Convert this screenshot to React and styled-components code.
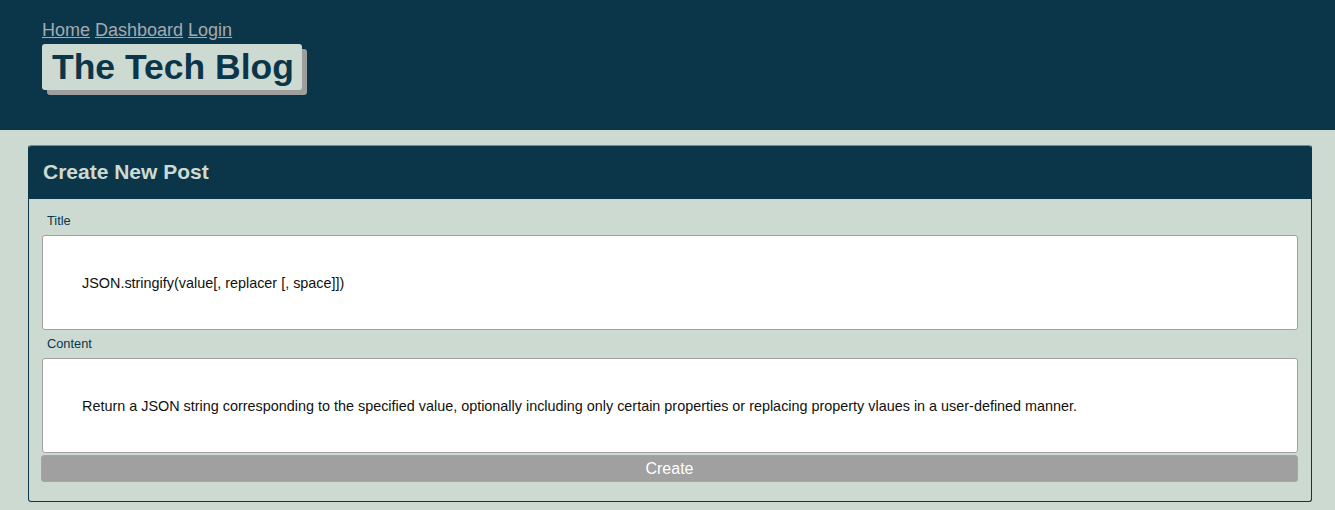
import styled, { createGlobalStyle } from "styled-components";

const GlobalStyle = createGlobalStyle`
  body {
    margin: 0;
    background: #cddad2;
    font-family: "Liberation Sans", Arial, sans-serif;
  }
`;

const Header = styled.header`
  background: #0b3649;
  height: 130px;
  padding: 20px 42px 0;
  box-sizing: border-box;
`;

const Nav = styled.nav`
  font-size: 18px;
  line-height: 21px;
`;

const NavLink = styled.a`
  color: #a5aab0;
  text-decoration: underline;
  margin-right: 5px;
`;

const Logo = styled.h1`
  display: inline-block;
  margin: 3px 0 0;
  padding: 3px 8px 3px 10px;
  background: #cddad2;
  color: #0b3649;
  font-size: 35.5px;
  line-height: 40px;
  border-radius: 3px;
  box-shadow: 5px 5px 0 #9e9e9e;
`;

const Main = styled.main`
  padding: 15px 23px 10px 28px;
`;

const Card = styled.section`
  border: 1px solid #0b3649;
  border-top-color: #6f8c95;
  border-radius: 3px;
  overflow: hidden;
`;

const CardHeader = styled.h2`
  margin: 0;
  background: #0b3649;
  color: #cddad2;
  font-size: 21px;
  line-height: 24px;
  padding: 14px 14px 15px;
`;

const Form = styled.form`
  display: flex;
  flex-direction: column;
  padding: 15px 13px 19px 13px;
`;

const Label = styled.label`
  font-size: 12.8px;
  line-height: 14px;
  color: #0b3649;
  margin: 0 0 7px 5px;
`;

const Field = styled.div`
  background: #fff;
  border: 1px solid #a0a0a0;
  border-radius: 3px;
  height: 93px;
  display: flex;
  align-items: center;
  padding: 0 39px;
  font-size: 14.4px;
  color: #111;
  margin: 0 0 7px;
`;

const Button = styled.button`
  background: #a0a0a0;
  color: #fff;
  border: 1px solid #a5a5a5;
  border-radius: 3px;
  height: 27px;
  font-family: "Liberation Sans", Arial, sans-serif;
  font-size: 16px;
  margin: -5px 0 0 -1px;
`;

export default function App() {
  return (
    <>
      <GlobalStyle />
      <Header>
        <Nav>
          <NavLink href="#">Home</NavLink>
          <NavLink href="#">Dashboard</NavLink>
          <NavLink href="#">Login</NavLink>
        </Nav>
        <Logo>The Tech Blog</Logo>
      </Header>
      <Main>
        <Card>
          <CardHeader>Create New Post</CardHeader>
          <Form>
            <Label>Title</Label>
            <Field>JSON.stringify(value[, replacer [, space]])</Field>
            <Label>Content</Label>
            <Field>
              Return a JSON string corresponding to the specified value, optionally including only certain properties or replacing property vlaues in a user-defined manner.
            </Field>
            <Button type="button">Create</Button>
          </Form>
        </Card>
      </Main>
    </>
  );
}
